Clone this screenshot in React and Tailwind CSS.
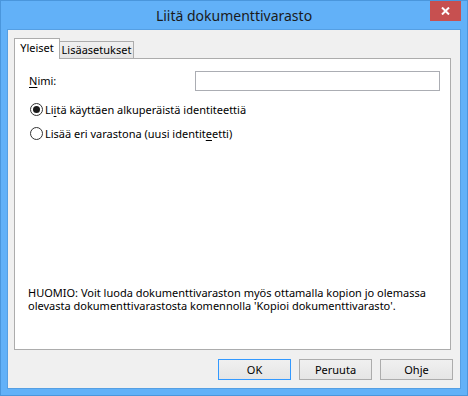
import React from "react";

const font = "font-['Noto_Sans',sans-serif]";

function Radio({ checked, children }) {
  return (
    <div className="flex h-[16px] items-center gap-[2px]">
      <span className="flex h-[13px] w-[13px] items-center justify-center rounded-full border border-[#333333] bg-white">
        {checked && <span className="h-[7px] w-[7px] rounded-full bg-[#1a1a1a]" />}
      </span>
      <span className="leading-[13px]">{children}</span>
    </div>
  );
}

function DialogButton({ primary, children }) {
  return (
    <button
      className={
        primary
          ? "h-[21px] w-[73px] border border-[#3399ff] bg-gradient-to-b from-[#f0f0f0] to-[#e5e5e5] leading-none text-black"
          : "h-[21px] w-[73px] border border-[#acacac] bg-gradient-to-b from-[#f0f0f0] to-[#e5e5e5] leading-none text-black"
      }
    >
      {children}
    </button>
  );
}

export default function App() {
  return (
    <div className={`${font} flex h-[396px] w-[468px] flex-col border border-[#4a96dc] bg-[#62b1f8] text-[11px] text-black`}>
      {/* title bar */}
      <div className="grid h-[28px] grid-cols-[1fr_auto_1fr]">
        <div />
        <div className="self-center pt-[1px] text-[14px] leading-none text-[#1b1b1b]">Liitä dokumenttivarasto</div>
        <div className="flex items-start justify-end pr-[6px]">
          <div className="flex h-[20px] w-[31px] items-center justify-center bg-[#c75050]">
            <svg width="9" height="8" viewBox="0 0 9 8">
              <path d="M1 0.5L8 7.5M8 0.5L1 7.5" stroke="white" strokeWidth="2" />
            </svg>
          </div>
        </div>
      </div>

      {/* client area */}
      <div className="mx-[6px] mb-[6px] flex flex-1 flex-col border border-[#559fe3] bg-[#f0f0f0]">
        <div className="flex h-[28px] items-end pl-[6px] pt-[8px]">
          <div className="relative z-10 -mb-px flex h-[21px] w-[46px] items-center justify-center border border-b-0 border-[#acacac] bg-white pb-[1px]">
            Yleiset
          </div>
          <div className="flex h-[17px] w-[74px] items-center justify-center border border-b-0 border-l-0 border-[#acacac] bg-gradient-to-b from-[#f0f0f0] to-[#e5e5e5]">
            Lisäasetukset
          </div>
        </div>

        <div className="ml-[6px] mr-[9px] flex h-[292px] flex-col border border-[#acacac] bg-white">
          <div className="mr-[10px] mt-[12px] flex items-center">
            <div className="w-[180px] pl-[14px]">
              <span className="underline underline-offset-2">N</span>imi:
            </div>
            <div className="h-[20px] flex-1 border border-[#abadb3] bg-white" />
          </div>

          <div className="mt-[10px] flex flex-col gap-[8px] pl-[15px]">
            <Radio checked>
              Li<span className="underline underline-offset-2">i</span>tä käyttäen alkuperäistä identiteettiä
            </Radio>
            <Radio>
              Lisää eri varastona (uusi identit<span className="underline underline-offset-2">e</span>etti)
            </Radio>
          </div>

          <p className="mb-[37px] mt-auto whitespace-nowrap pl-[13px] leading-[13px]">
            HUOMIO: Voit luoda dokumenttivaraston myös ottamalla kopion jo olemassa
            <br />
            olevasta dokumenttivarastosta komennolla 'Kopioi dokumenttivarasto'.
          </p>
        </div>

        <div className="mr-[7px] mt-[9px] flex justify-end gap-[8px]">
          <DialogButton primary>OK</DialogButton>
          <DialogButton>Peruuta</DialogButton>
          <DialogButton>Ohje</DialogButton>
        </div>
      </div>
    </div>
  );
}
